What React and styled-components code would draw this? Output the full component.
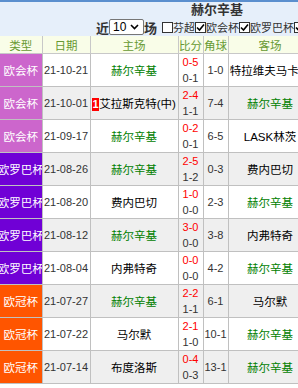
import React from 'react'
import styled, { createGlobalStyle } from 'styled-components'

const matches = [
  { type: '欧会杯', date: '21-10-21', home: '赫尔辛基', homeWin: true, ft: '0-5', ht: '0-1', corner: '1-0', away: '特拉维夫马卡比' },
  { type: '欧会杯', date: '21-10-01', home: '艾拉斯克特(中)', rank: 1, ft: '2-4', ht: '1-1', corner: '7-4', away: '赫尔辛基', awayWin: true },
  { type: '欧会杯', date: '21-09-17', home: '赫尔辛基', homeWin: true, ft: '0-2', ht: '0-1', corner: '6-5', away: 'LASK林茨' },
  { type: '欧罗巴杯', date: '21-08-26', home: '赫尔辛基', homeWin: true, ft: '2-5', ht: '1-2', corner: '0-3', away: '费内巴切' },
  { type: '欧罗巴杯', date: '21-08-20', home: '费内巴切', ft: '1-0', ht: '0-0', corner: '2-3', away: '赫尔辛基', awayWin: true },
  { type: '欧罗巴杯', date: '21-08-12', home: '赫尔辛基', homeWin: true, ft: '3-0', ht: '0-0', corner: '3-8', away: '内弗特奇' },
  { type: '欧罗巴杯', date: '21-08-04', home: '内弗特奇', ft: '0-0', ht: '0-0', corner: '4-2', away: '赫尔辛基', awayWin: true },
  { type: '欧冠杯', date: '21-07-27', home: '赫尔辛基', homeWin: true, ft: '2-2', ht: '1-1', corner: '6-1', away: '马尔默' },
  { type: '欧冠杯', date: '21-07-22', home: '马尔默', ft: '2-1', ht: '1-0', corner: '10-1', away: '赫尔辛基', awayWin: true },
  { type: '欧冠杯', date: '21-07-14', home: '布度洛斯', ft: '0-4', ht: '0-3', corner: '13-1', away: '赫尔辛基', awayWin: true },
]

const typeColors = {
  '欧会杯': '#cc66cc',
  '欧罗巴杯': '#7000d6',
  '欧冠杯': '#ff5500',
}

const filters = [
  { name: '芬超', checked: false },
  { name: '欧会杯', checked: true },
  { name: '欧罗巴杯', checked: true },
  { name: '欧冠杯', checked: true },
]

const GlobalStyle = createGlobalStyle`
  body {
    margin: 0;
    overflow: hidden;
    background: #fff;
    font-family: "Liberation Sans", "Noto Sans CJK SC", sans-serif;
    font-size: 11.5px;
  }
`

const Page = styled.div`
  width: 434px;
`

const Header = styled.div`
  background: #e6effa;
  border-top: 2px solid #5b8fce;
`

const Title = styled.div`
  text-align: center;
  font-weight: bold;
  font-size: 13px;
  line-height: 16px;
  color: #333;
`

const Controls = styled.div`
  display: flex;
  align-items: center;
  justify-content: center;
  height: 18px;
  color: #333;
`

const Bold = styled.span`
  font-weight: bold;
  font-size: 13px;
`

const Select = styled.div`
  display: flex;
  align-items: center;
  justify-content: space-between;
  width: 35px;
  height: 16px;
  padding: 0 4px 0 3px;
  border: 1px solid #767676;
  border-radius: 2px;
  background: #fff;
  font-size: 12px;
  color: #000;
  box-sizing: border-box;
`

const Filter = styled.label`
  display: flex;
  align-items: center;
  margin-left: ${(p) => (p.first ? '5px' : '0')};
  font-size: 11px;
  color: #333;
`

const Box = styled.span`
  display: inline-flex;
  align-items: center;
  justify-content: center;
  width: 11px;
  height: 11px;
  box-sizing: border-box;
  border: 1px solid #333;
  background: #fff;
`

const Table = styled.table`
  border-collapse: collapse;
  table-layout: fixed;
  width: 312px;
`

const HeadCell = styled.th`
  height: 17px;
  padding: 0;
  font-weight: normal;
  font-size: 11.5px;
  color: #669933;
  background: #f9fde8;
  border-right: 1px solid #c8c8c8;
  border-bottom: 1px solid #c8c8c8;
  white-space: nowrap;
  overflow: hidden;
`

const Row = styled.tr`
  background: ${(p) => (p.shade ? '#efefef' : '#fff')};
`

const Cell = styled.td`
  height: 32px;
  padding: 0;
  text-align: center;
  color: #333;
  font-size: ${(p) => (p.num ? '11px' : '11.5px')};
  border-right: 1px solid #c0c0c0;
  border-bottom: 1px solid #c0c0c0;
  white-space: nowrap;
  overflow: hidden;
`

const TypeCell = styled(Cell)`
  background: ${(p) => p.color};
  color: #fff;
`

const Centered = styled.div`
  display: flex;
  justify-content: center;
`

const Team = styled.span`
  color: ${(p) => (p.win ? '#008000' : '#000')};
`

const Rank = styled.span`
  display: inline-block;
  background: #f00;
  color: #fff;
  font-weight: bold;
  font-size: 11px;
  line-height: 13px;
  padding: 0 0.5px;
`

const Score = styled.div`
  line-height: 16px;
  color: ${(p) => (p.full ? '#f00' : '#333')};
`

function Check() {
  return (
    <svg width="9" height="9" viewBox="0 0 9 9">
      <path d="M1 4.5 L3.5 7 L8 1.5" fill="none" stroke="#000" strokeWidth="1.6" />
    </svg>
  )
}

export default function App() {
  return (
    <Page>
      <GlobalStyle />
      <Header>
        <Title>赫尔辛基</Title>
        <Controls>
          <Bold>近</Bold>
          <Select>
            10
            <svg width="9" height="6" viewBox="0 0 9 6">
              <path d="M1 1 L4.5 4.5 L8 1" fill="none" stroke="#000" strokeWidth="1.6" />
            </svg>
          </Select>
          <Bold>场</Bold>
          {filters.map((f, i) => (
            <Filter key={f.name} first={i === 0}>
              <Box>{f.checked && <Check />}</Box>
              {f.name}
            </Filter>
          ))}
        </Controls>
      </Header>
      <Table>
        <colgroup>
          <col style={{ width: 42 }} />
          <col style={{ width: 48 }} />
          <col style={{ width: 88 }} />
          <col style={{ width: 25 }} />
          <col style={{ width: 25 }} />
          <col style={{ width: 84 }} />
        </colgroup>
        <thead>
          <tr>
            <HeadCell>类型</HeadCell>
            <HeadCell>日期</HeadCell>
            <HeadCell>主场</HeadCell>
            <HeadCell>比分</HeadCell>
            <HeadCell>角球</HeadCell>
            <HeadCell>客场</HeadCell>
          </tr>
        </thead>
        <tbody>
          {matches.map((m, i) => (
            <Row key={m.date} shade={i % 2 === 1}>
              <TypeCell color={typeColors[m.type]}>
                <Centered>{m.type}</Centered>
              </TypeCell>
              <Cell num>{m.date}</Cell>
              <Cell>
                {m.rank && <Rank>{m.rank}</Rank>}
                <Team win={m.homeWin}>{m.home}</Team>
              </Cell>
              <Cell num>
                <Score full>{m.ft}</Score>
                <Score>{m.ht}</Score>
              </Cell>
              <Cell num>{m.corner}</Cell>
              <Cell>
                <Team win={m.awayWin}>{m.away}</Team>
              </Cell>
            </Row>
          ))}
        </tbody>
      </Table>
    </Page>
  )
}
